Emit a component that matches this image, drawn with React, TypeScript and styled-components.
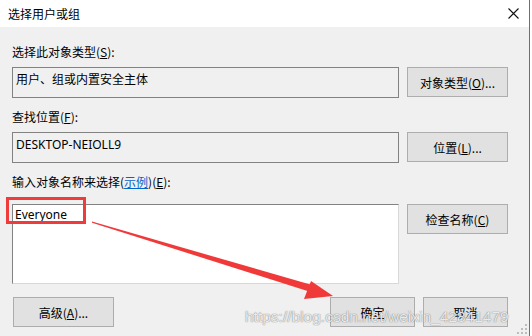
import React from 'react';
import styled, { createGlobalStyle } from 'styled-components';

const GlobalStyle = createGlobalStyle`
  html, body {
    margin: 0;
    padding: 0;
    background: #ffffff;
  }
  body {
    font-family: "Noto Sans CJK SC", "Noto Sans", sans-serif;
    font-size: 12px;
    color: #000;
  }
`;

const Key: React.FC<{ k: string }> = ({ k }) => <u>{k}</u>;

const SelectUserDialog: React.FC = () => {
  return (
    <Window>
      <TitleBar>
        <Title>选择用户或组</Title>
        <CloseButton aria-label="close">
          <svg width="11" height="11" viewBox="0 0 11 11">
            <path d="M0.5 0.5 L10.5 10.5 M10.5 0.5 L0.5 10.5" stroke="#111" strokeWidth="1.1" />
          </svg>
        </CloseButton>
      </TitleBar>

      <Body>
        <Label style={{ marginTop: 0 }}>
          选择此对象类型(<Key k="S" />):
        </Label>
        <Row>
          <ReadBox>用户、组或内置安全主体</ReadBox>
          <Button>
            对象类型(<Key k="O" />)...
          </Button>
        </Row>

        <Label>
          查找位置(<Key k="F" />):
        </Label>
        <Row>
          <ReadBox>DESKTOP-NEIOLL9</ReadBox>
          <Button>
            位置(<Key k="L" />)...
          </Button>
        </Row>

        <Label>
          输入对象名称来选择(<Link>示例</Link>)(<Key k="E" />):
        </Label>
        <Row $tall>
          <EditArea>Everyone</EditArea>
          <Button>
            检查名称(<Key k="C" />)
          </Button>
        </Row>

        <Footer>
          <Button>
            高级(<Key k="A" />)...
          </Button>
          <FooterRight>
            <OkButton>确定</OkButton>
            <OkButton>取消</OkButton>
          </FooterRight>
        </Footer>
      </Body>

      <Highlight />
      <ArrowLayer width="532" height="336" viewBox="0 0 532 336">
        <polygon points="92,221.5 312,285 309,291.5 92,222.8" fill="#f03a3a" />
        <polygon points="333,296 311,281 304,299" fill="#f03a3a" />
      </ArrowLayer>

      <Watermark>https://blog.csdn.net/weixin_42841479</Watermark>

      <Grip width="10" height="10" viewBox="0 0 10 10">
        <rect x="8" y="0" width="2" height="2" fill="#bdbdbd" />
        <rect x="4" y="4" width="2" height="2" fill="#bdbdbd" />
        <rect x="8" y="4" width="2" height="2" fill="#bdbdbd" />
        <rect x="0" y="8" width="2" height="2" fill="#bdbdbd" />
        <rect x="4" y="8" width="2" height="2" fill="#bdbdbd" />
        <rect x="8" y="8" width="2" height="2" fill="#bdbdbd" />
      </Grip>
    </Window>
  );
};

export default function App() {
  return (
    <>
      <GlobalStyle />
      <SelectUserDialog />
    </>
  );
}

// Styled Components
const Window = styled.div`
  position: relative;
  width: 529px;
  height: 336px;
  border-right: 1px solid #6f6f6f;
  background: #f0f0f0;
  display: flex;
  flex-direction: column;
  overflow: hidden;
`;

const TitleBar = styled.div`
  height: 27px;
  background: #ffffff;
  display: flex;
  align-items: center;
  justify-content: space-between;
  padding: 0 10px 0 8px;
`;

const Title = styled.div`
  font-size: 12px;
  line-height: 16px;
  color: #000;
`;

const CloseButton = styled.div`
  display: flex;
  align-items: center;
  margin-top: -1px;
`;

const Body = styled.div`
  display: flex;
  flex-direction: column;
  padding: 17px 21px 0 12px;
`;

const Label = styled.div`
  line-height: 16px;
  height: 16px;
  margin-top: 11px;
  margin-bottom: 7px;
  color: #000;
  white-space: nowrap;

  u {
    text-underline-offset: 1px;
  }
`;

const Row = styled.div<{ $tall?: boolean }>`
  display: flex;
  align-items: flex-start;
  gap: 8px;
  margin-top: ${(p) => (p.$tall ? '7px' : '0')};
`;

const ReadBox = styled.div`
  box-sizing: border-box;
  flex: 0 0 387px;
  height: 31px;
  border: 1px solid #828282;
  background: #f0f0f0;
  padding: 4px 3px;
  line-height: 16px;
  font-family: "Noto Sans", "Noto Sans CJK SC", sans-serif;
  font-size: 12px;
`;

const EditArea = styled.div`
  box-sizing: border-box;
  flex: 0 0 387px;
  height: 80px;
  border: 1px solid #828282;
  border-right-color: #d8d8d8;
  border-bottom-color: #d8d8d8;
  background: #ffffff;
  padding: 2px 2px;
  line-height: 16px;
  font-family: "Noto Sans", sans-serif;
  font-size: 12px;
`;

const Button = styled.div`
  box-sizing: border-box;
  flex: 0 0 101px;
  width: 101px;
  height: 30px;
  background: #e1e1e1;
  border: 1px solid #adadad;
  display: flex;
  align-items: center;
  justify-content: center;
  font-size: 12px;
  color: #000;
  white-space: nowrap;

  u {
    text-underline-offset: 1px;
  }
`;

const OkButton = styled(Button)`
  flex: 0 0 85px;
  width: 85px;
`;

const Footer = styled.div`
  display: flex;
  justify-content: space-between;
  align-items: center;
  margin-top: 13px;
  padding-left: 1px;
`;

const FooterRight = styled.div`
  display: flex;
  gap: 8px;
`;

const Link = styled.span`
  color: #0066cc;
  text-decoration: underline;
  text-underline-offset: 1px;
`;

const Highlight = styled.div`
  position: absolute;
  left: 6px;
  top: 197px;
  width: 80px;
  height: 27px;
  box-sizing: border-box;
  border: 3px solid #ef3b3b;
`;

const ArrowLayer = styled.svg`
  position: absolute;
  left: 0;
  top: 0;
  pointer-events: none;
`;

const Watermark = styled.div`
  position: absolute;
  left: 245px;
  top: 307px;
  font-family: "Liberation Sans", Arial, sans-serif;
  font-size: 15.5px;
  line-height: 20px;
  color: rgba(255, 255, 255, 0.85);
  text-shadow: 0 0 1px rgba(90, 90, 90, 0.7), 0 0 1px rgba(90, 90, 90, 0.5);
  white-space: nowrap;
  pointer-events: none;
`;

const Grip = styled.svg`
  position: absolute;
  right: 2px;
  bottom: 2px;
`;
